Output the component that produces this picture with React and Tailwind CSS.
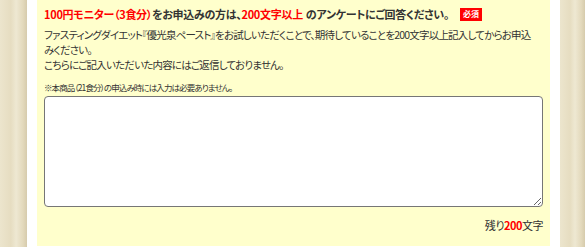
import React, { useState } from 'react';

const jp = "font-['Noto_Sans_CJK_JP','Noto_Sans',sans-serif] [font-feature-settings:'palt']";

const Wood = ({ className }) => (
  <div
    className={`h-full bg-[#e8e0c6] bg-[linear-gradient(90deg,#ece5cd_0%,#e6ddc1_40%,#eee8d2_60%,#e3d9bc_85%,#d6cbac_100%)] ${className}`}
  />
);

const App = () => {
  const [text, setText] = useState('');
  const left = Math.max(0, 200 - text.length);

  return (
    <div className={`flex h-[247px] w-[585px] overflow-hidden bg-white ${jp}`}>
      <Wood className="w-[27px] shrink-0" />
      <div className="flex w-[533px] shrink-0 flex-col bg-white px-[10px] pb-[1px]">
        <div className="flex flex-1 flex-col bg-[#ffffcc] px-[7px] pt-[6px] text-[#333333]">
          <div className="flex items-center">
            <p className="whitespace-nowrap text-[11px] font-bold leading-[16px] tracking-[-0.3px]">
              <span className="text-[#ff0000]">100円モニター（3食分）</span>
              をお申込みの方は、
              <span className="text-[#ff0000]">200文字以上</span>
              <span className="ml-[3px]">のアンケートにご回答ください。</span>
            </p>
            <span className="ml-[11px] flex h-[13px] w-[22px] items-center justify-center bg-[#ff0000] text-[8px] font-bold leading-none text-white">
              必須
            </span>
          </div>

          <p className="mt-[5px] whitespace-nowrap text-[10.5px] leading-[15px] tracking-[-0.8px]">
            ファスティングダイエット『優光泉ペースト』をお試しいただくことで、期待していることを200文字以上記入してからお申込
            <br />
            みください。
            <br />
            こちらにご記入いただいた内容にはご返信しておりません。
          </p>

          <p className="mt-[9px] whitespace-nowrap text-[8.5px] leading-[12px] tracking-[-0.9px]">
            ※本商品（21食分）の申込み時には入力は必要ありません。
          </p>

          <textarea
            value={text}
            onChange={(e) => setText(e.target.value)}
            className="mt-[3px] h-[111px] w-full resize-y rounded-[4px] border border-[#767676] bg-white p-1 text-[12px] outline-none"
          />

          <p className="mt-[11px] text-right text-[11px] leading-[14px] tracking-[-0.5px]">
            残り<span className="font-bold text-[#ff0000]">{left}</span>文字
          </p>
        </div>
      </div>
      <Wood className="w-[25px] shrink-0" />
    </div>
  );
};

export default App;
